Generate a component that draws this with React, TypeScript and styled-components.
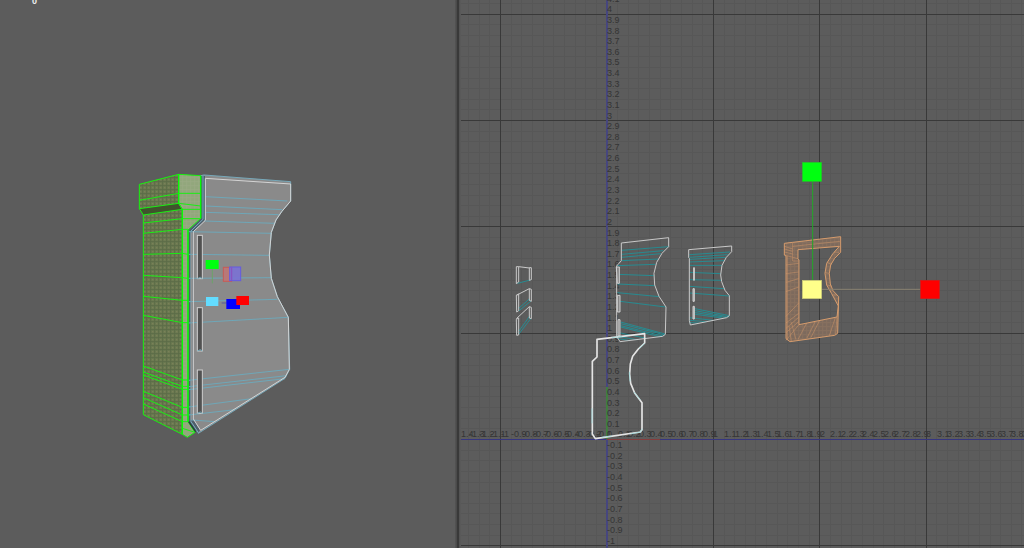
import React from "react";
import styled, { createGlobalStyle } from "styled-components";

const GlobalStyle = createGlobalStyle`
  * { box-sizing: border-box; }
  body { margin: 0; background: #5c5c5c; font-family: "Liberation Sans", Arial, sans-serif; }
`;

const Workspace = styled.main`
  display: grid;
  grid-template-columns: 455fr 6px 563fr;
  min-height: 100vh;
`;

const Viewport = styled.section`
  display: flex;
  min-width: 0;
  overflow: hidden;
  background: #5c5c5c;
`;

const Divider = styled.div`
  background: linear-gradient(90deg, #555 0, #484848 33%, #393939 34%, #393939 66%, #505050 67%, #5c5c5c 100%);
`;

const Canvas = styled.svg`
  flex: 1;
  width: 100%;
  height: 100vh;
  display: block;
`;

const AxisLabel = styled.text`
  font-size: 9px;
  fill: #353535;
`;

const HudLabel = styled.text`
  font-size: 9px;
  font-weight: 700;
  fill: #f0f0f0;
`;

type Seg = [number, number, number, number];
const toPath = (segs: Seg[]) => segs.map(([a, b, c, d]) => `M${a} ${b}L${c} ${d}`).join("");

const sideEdges =
  "M28 106L146 85H212M28 131L146 115L157 133H212M40 150L157 133M146 115L212 123M40 174L157 161H212M40 205L157 193H174" +
  "M40 268L157 265L174 268M40 331L157 338L174 340M40 394L157 406H174M40 451L157 473H174" +
  "M40 603L157 645H174M40 621L157 664H174M40 630L157 673H174M40 679L157 727H174M40 698L157 750H174M40 717L157 770H174" +
  "M157 770V808M157 790L195 802";

const faceEdges: Seg[] = [
  [226, 95, 472, 108], [226, 123, 457, 134], [226, 142, 446, 149], [222, 168, 434, 175],
  [176, 200, 424, 205], [176, 268, 418, 271], [176, 340, 424, 338], [176, 410, 442, 403],
  [176, 474, 475, 457], [176, 646, 478, 613], [176, 665, 470, 632], [176, 674, 465, 641],
  [176, 726, 365, 701], [176, 750, 315, 734], [185, 765, 255, 770],
];

function Model() {
  return (
    <g transform="translate(130 165) scale(.33333)" strokeWidth="3" fill="none">
      <path d="M212 32L222 30L482 50V108L455 140L438 165L424 202L418 270L424 340L442 395L475 457L479 613L465 640L205 805L174 770V195L212 160Z" fill="#8a8a8a" stroke="#76a9ba" />
      <path d="M213 33H225V166L190 200V762L210 796L203 804L175 770V195L213 160Z" fill="#4f5f6b" />
      <path d="M183 198L219 163V33M183 198V770L205 803" stroke="#78afc2" />
      <path d="M185 202V765" stroke="#929292" strokeWidth="6" />
      <path d={toPath(faceEdges)} stroke="#6ea7b8" />
      <path d="M226 40L482 57V108L455 140L438 165L424 202L418 270L424 340L442 395L475 457L478 613L465 637L212 796L190 762V200L226 166Z" stroke="#d4d4d4" />
      {[211, 428, 615].map((y) => (
        <g key={y}>
          <rect x="202" y={y} width="15" height="130" fill="#515151" stroke="#d0d0d0" />
          <path d={`M202 ${y + 130}l9 -4l6 4`} stroke="#6ea7b8" />
        </g>
      ))}
      <path d="M146 28L212 32V160L174 195V770L195 802L172 817L157 808V133L146 115Z" fill="#92a77c" />
      <path d="M28 58L146 28V115L157 133V808L40 749V150L28 131Z" fill="#6b7a50" />
      <path d="M28 58L146 28V115L157 133V808L40 749V150L28 131Z" fill="url(#mesh-green)" />
      <path d="M146 28L212 32V160L174 195V770L157 800V133L146 115Z" fill="url(#mesh-light)" />
      <path d="M28 131L146 115L157 133L40 150Z" fill="#40532d" />
      <path d={sideEdges} stroke="#19ef13" />
      <path d="M28 58L146 28L212 32V160L174 195V770L195 802L172 817L157 808L40 749V150L28 131ZM146 28V115L157 133V808" stroke="#17f20e" />
      <path d="M157 133V808M146 28V115M212 32V160M174 195V770" stroke="#08fb05" strokeWidth="4" />
      <path d="M176 770L197 800" stroke="#213f30" strokeWidth="4" />
      <path d="M247 312V355" stroke="#6aa468" />
      <path d="M275 414H290" stroke="#555ca0" />
      <rect x="227" y="285" width="39" height="27" fill="#00ff10" />
      <rect x="280" y="307" width="25" height="42" fill="#b87878" stroke="#c75b57" />
      <rect x="299" y="306" width="33" height="41" fill="#7970d8" fillOpacity=".85" stroke="#655be0" />
      <path d="M305 307V346" stroke="#8a4fc0" />
      <rect x="228" y="396" width="37" height="27" fill="#63dcff" />
      <rect x="289" y="402" width="41" height="30" fill="#0000ff" />
      <rect x="319" y="393" width="38" height="27" fill="#ff0000" />
    </g>
  );
}

const OX = 607;
const OY = 439.5;
const UNIT = 106.4;
const VUNIT = 106.3;
const range = (from: number, to: number) => Array.from({ length: to - from + 1 }, (_, i) => from + i);
const gx = (n: number) => Math.floor(OX + (n * UNIT) / 10) + 0.5;
const gy = (n: number) => Math.floor(OY - (n * VUNIT) / 10) + 0.5;
const columns = range(-13, 39);
const rows = range(-10, 41);

function Grid() {
  return (
    <g strokeWidth="1">
      <path d={columns.map((n) => `M${gx(n)} 0V548`).join("")} stroke="#575757" />
      <path d={rows.map((n) => `M461 ${gy(n)}H1024`).join("")} stroke="#575757" />
      <path d={columns.filter((n) => n % 10 === 0 && n).map((n) => `M${gx(n)} 0V548`).join("")} stroke="#393939" />
      <path d={rows.filter((n) => n % 10 === 0 && n).map((n) => `M461 ${gy(n)}H1024`).join("")} stroke="#393939" />
      <path d={`M461 ${gy(0)}H1024`} stroke="#36367f" />
      <path d="M607 0V548" stroke="#46467f" strokeWidth="2" />
      <path d={`M607 ${gy(0)}H660`} stroke="#853d3d" />
      <path d="M607 387V439" stroke="#417e40" strokeWidth="2" />
    </g>
  );
}

function Labels() {
  return (
    <g>
      {columns.map((n) => (
        <AxisLabel key={`x${n}`} x={Math.round(OX + (n * UNIT) / 10)} y={437}>{n / 10}</AxisLabel>
      ))}
      <AxisLabel x={458} y={437}>-1.4</AxisLabel>
      {rows.filter((n) => n !== 0).map((n) => (
        <AxisLabel key={`y${n}`} x={607} y={Math.round(OY - (n * VUNIT) / 10) - 2}>{n / 10}</AxisLabel>
      ))}
    </g>
  );
}

const largeShellEdges: Seg[] = [
  [365, 76, 506, 65], [365, 88, 490, 77], [365, 97, 483, 86], [365, 107, 475, 102], [352, 122, 466, 118],
  [352, 148, 462, 152], [352, 177, 464, 182], [352, 203, 478, 215], [352, 228, 497, 246],
  [362, 291, 495, 327], [362, 296, 495, 330], [362, 302, 488, 333], [362, 306, 478, 335],
  [352, 322, 440, 340], [352, 334, 410, 344], [352, 340, 388, 347],
];
const smallShellEdges: Seg[] = [
  [568, 89, 690, 81], [568, 97, 683, 89], [568, 103, 677, 97], [568, 111, 672, 107], [568, 121, 666, 121],
  [568, 142, 662, 146], [568, 164, 664, 166], [568, 184, 672, 191], [568, 204, 688, 213],
  [580, 250, 688, 272], [580, 256, 688, 276], [580, 262, 678, 277], [580, 267, 665, 279],
  [568, 278, 640, 286], [568, 286, 620, 290], [568, 293, 596, 294],
];

function Shells() {
  return (
    <g transform="translate(500 225) scale(.33333)" strokeWidth="3" fill="none">
      <g stroke="#278b91">
        <path d={toPath(largeShellEdges)} />
        <path d={toPath(smallShellEdges)} />
        <path d="M52 175L91 165M54 252L90 220M56 258L93 228M54 322L90 272M56 328L93 280" />
      </g>
      <g stroke="#c9c9c9">
        <path d="M364 54L506 38V65L486 85L470 112L462 145L464 180L477 214L498 246L496 328L488 334L360 350L350 334V123L364 107Z" />
        <path d="M566 74L695 63V80L679 97L666 121L662 150L665 170L675 196L688 212V272L680 278L571 300L568 286V100L566 98Z" />
        <path d="M49 125H56V171L49 176ZM56 125L88 129M88 128H94V164L88 166Z" />
        <path d="M49 211L56 207V257L50 261ZM49 211L88 191L94 193V229L88 226V191" />
        <path d="M49 283L56 279V330L50 331ZM49 281L88 245L94 247V281L88 279V245" />
      </g>
      <g fill="#aaa" stroke="#d0d0d0">
        <path d="M349 126H358V175H352ZM352 211H360V261H352ZM354 284H360V333H354Z" fill="#858585" />
        <path d="M581 128H583V166H581ZM579 191H583V229H579ZM579 244H583V282H579Z" />
      </g>
    </g>
  );
}

function SelectedBorder() {
  const outline = "M51 58L194 41V69L175 87L158 109L151 132L149 162L152 190L164 219L186 248V329L181 336L46 356L37 342V124L51 111Z";
  return (
    <g transform="translate(580 320) scale(.33333)" fill="none" strokeLinejoin="round">
      <path d={outline} stroke="#e4e4e4" strokeWidth="5" />
      <path d="M194 70L177 86M148 155L150 184M162 216L181 240M187 326L181 336L152 342M65 352L95 348M96 53L126 49M36 265V310" stroke="#8ed8da" strokeWidth="2" />
    </g>
  );
}

const orangeShape =
  "M43 280L68 277L212 260V307L194 325L182 345L178 370L181 402L189 422L206 440L203 550L194 556L60 575L48 566V318L43 315Z" +
  "M84 299V326L87 330V524L201 501L205 468L185 431L170 405L165 370L170 340L188 312L208 289Z";
const orangeEdges: Seg[] = [
  [68, 277, 68, 333], [52, 318, 52, 570], [68, 289, 210, 274], [43, 289, 68, 297], [43, 297, 68, 304], [43, 306, 68, 312],
  [43, 315, 84, 326], [48, 345, 86, 340], [48, 371, 86, 366], [48, 397, 86, 386], [48, 425, 86, 411],
  [48, 499, 86, 459], [48, 519, 86, 490], [48, 535, 86, 502], [48, 548, 86, 515],
  [87, 524, 48, 571], [110, 519, 84, 569], [135, 516, 111, 564], [148, 513, 123, 562],
  [196, 503, 178, 557], [201, 501, 197, 552], [57, 528, 64, 573], [64, 517, 78, 569],
  [172, 338, 185, 343], [166, 368, 178, 370], [172, 405, 184, 408], [190, 435, 201, 435], [192, 306, 207, 307], [68, 333, 86, 333],
];

function ScaleShell() {
  return (
    <g transform="translate(770 150) scale(.33333)" strokeWidth="3" fill="none">
      <path d={orangeShape} fillRule="evenodd" fill="#7d6a5d" />
      <path d={orangeShape} fillRule="evenodd" fill="url(#mesh-orange)" />
      <path d={toPath(orangeEdges)} stroke="#bd8d67" strokeWidth="2" />
      <path d={orangeShape} stroke="#d69c6c" />
      <path d="M128 94V390" stroke="#22a727" />
      <path d="M155 418H451" stroke="#8a8270" />
      <rect x="97" y="37" width="58" height="57" fill="#00ff10" stroke="#26be2c" strokeWidth="2" />
      <rect x="97" y="391" width="58" height="55" fill="#ffff8a" stroke="#c9c978" strokeWidth="2" />
      <rect x="452" y="391" width="56" height="55" fill="#ff0000" stroke="#d51c1c" strokeWidth="2" />
    </g>
  );
}

export default function App() {
  return (
    <>
      <GlobalStyle />
      <Workspace>
        <Viewport aria-label="Perspective view">
          <Canvas viewBox="0 0 455 548" preserveAspectRatio="xMinYMin slice">
            <defs>
              <pattern id="mesh-green" width="12" height="12" patternUnits="userSpaceOnUse">
                <path d="M0 2H12M2 0V12" stroke="#5c6c47" strokeWidth="3" />
                <path d="M6 8H10" stroke="#7a8059" strokeWidth="4" />
              </pattern>
              <pattern id="mesh-light" width="12" height="12" patternUnits="userSpaceOnUse">
                <path d="M0 2H12M2 0V12" stroke="#9aa985" strokeWidth="2" />
              </pattern>
            </defs>
            <HudLabel x="32" y="4">0</HudLabel>
            <Model />
          </Canvas>
        </Viewport>
        <Divider />
        <Viewport aria-label="UV editor">
          <Canvas viewBox="461 0 563 548" preserveAspectRatio="xMinYMin slice">
            <defs>
              <pattern id="mesh-orange" width="12" height="12" patternUnits="userSpaceOnUse">
                <path d="M0 2H12M2 0V12" stroke="#87705f" strokeWidth="3" />
              </pattern>
            </defs>
            <Grid />
            <Labels />
            <Shells />
            <SelectedBorder />
            <ScaleShell />
          </Canvas>
        </Viewport>
      </Workspace>
    </>
  );
}
